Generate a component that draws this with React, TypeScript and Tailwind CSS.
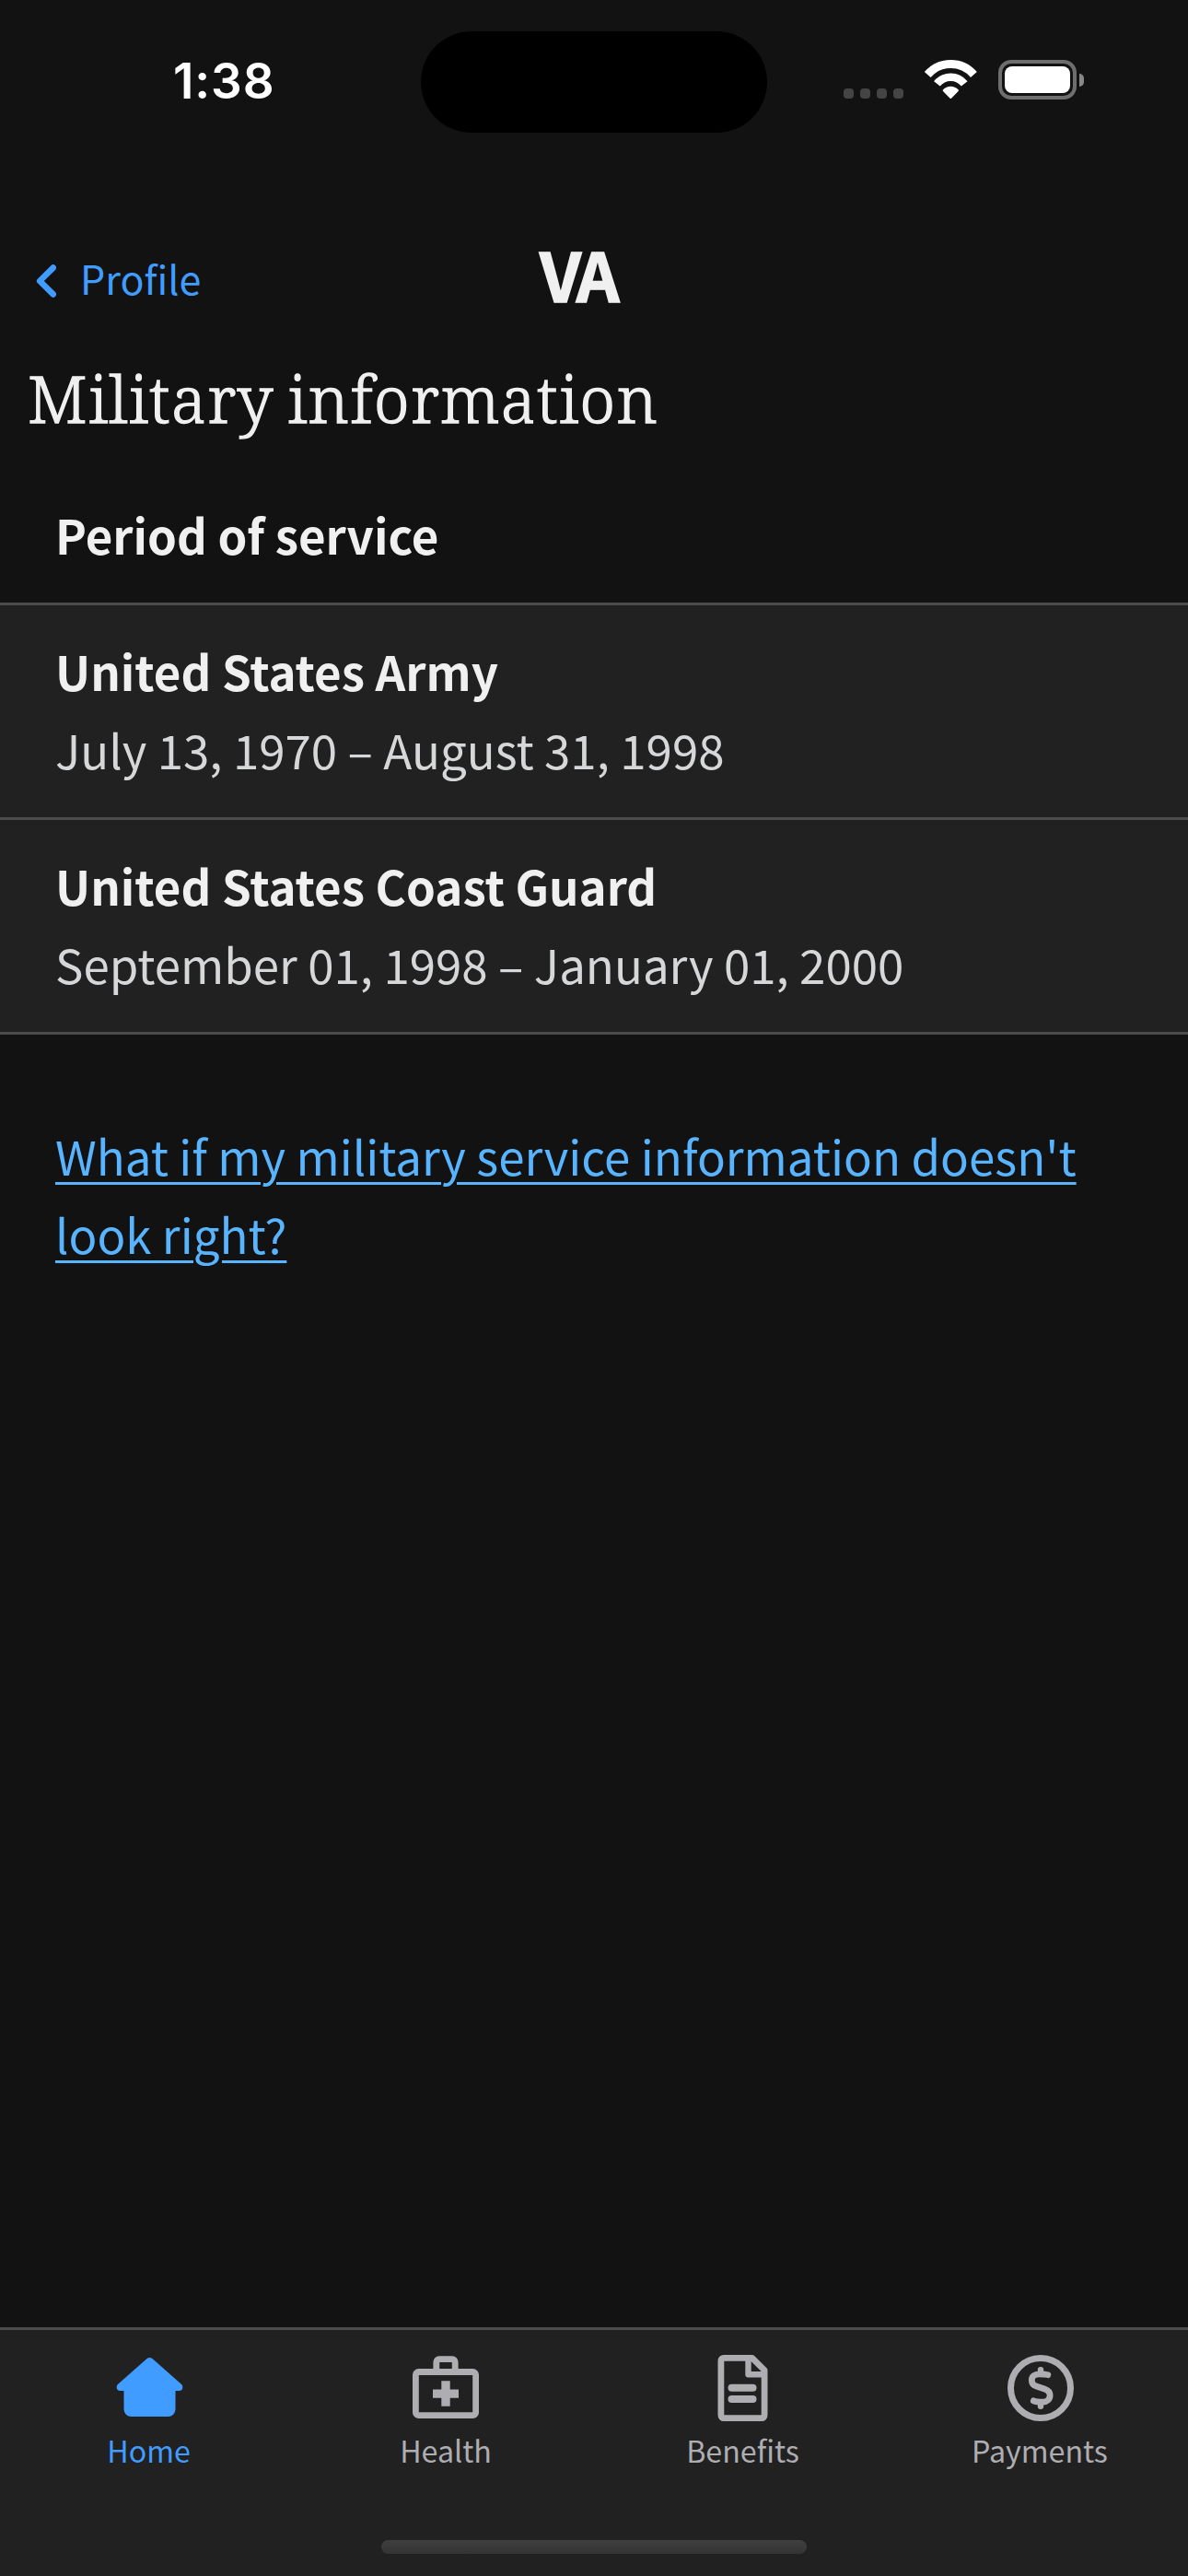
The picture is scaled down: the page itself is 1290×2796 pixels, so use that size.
import type { ReactNode } from "react";

const periods = [
  { branch: "United States Army", dates: "July 13, 1970 – August 31, 1998" },
  { branch: "United States Coast Guard", dates: "September 01, 1998 – January 01, 2000" },
];

function WifiIcon() {
  return (
    <svg className="h-[43px] w-[60px]" viewBox="-30.3 -37.7 60 43" fill="none">
      <path d="M-25.1 -21.7 A33.2 33.2 0 0 1 25.1 -21.7" stroke="#fff" strokeWidth="9" />
      <path d="M-14.9 -11.8 A19 19 0 0 1 14.9 -11.8" stroke="#fff" strokeWidth="8.6" />
      <path d="M-8.2 -5.4 A11 11 0 0 1 8.2 -5.4 Q9.2 -4.6 8.3 -3.7 L0.7 4 Q0 4.6 -0.7 4 L-8.3 -3.7 Q-9.2 -4.6 -8.2 -5.4Z" fill="#fff" />
    </svg>
  );
}

function StatusBar() {
  return (
    <div className="flex h-[256px] items-start">
      <div className="w-[457px] pt-[58px] pl-[188px] font-['Inter',sans-serif] text-[53px] leading-[60px] font-semibold tracking-[0.9px] text-white">
        1:38
      </div>
      <div className="mt-[34px] h-[110px] w-[376px] rounded-full bg-black" />
      <div className="flex items-end pt-[65px] pl-[83px]">
        <div className="mb-px flex gap-[7px]">
          <span className="size-[11px] rounded-[4px] bg-[#444]" />
          <span className="size-[11px] rounded-[4px] bg-[#444]" />
          <span className="size-[11px] rounded-[4px] bg-[#444]" />
          <span className="size-[11px] rounded-[4px] bg-[#444]" />
        </div>
        <div className="ml-[21px]">
          <WifiIcon />
        </div>
        <div className="ml-[22px] flex items-center">
          <div className="flex h-[43px] w-[85px] items-center justify-center rounded-[14px] border-4 border-[#6e6e6e]">
            <div className="h-[29px] w-[71px] rounded-[8px] bg-white" />
          </div>
          <div className="ml-[3px] h-[14px] w-[5px] rounded-r-full bg-[#888]" />
        </div>
      </div>
    </div>
  );
}

function Header() {
  return (
    <header className="flex h-[90px] items-center">
      <a className="flex w-[586px] items-center gap-[26px] pl-[39px] text-[43px] leading-[60px] text-[#409cff]">
        <svg className="mt-[8px] h-[36px] w-[22px]" viewBox="0 0 22 36" fill="none" stroke="#409cff" strokeWidth="6.6" strokeLinecap="round" strokeLinejoin="round">
          <path d="M18.7 3.6 L4.2 18 L18.7 32.4" />
        </svg>
        Profile
      </a>
      <div className="pb-[11px] text-[73px] leading-[80px] font-bold tracking-[-4px] text-[#f0f0f0] [-webkit-text-stroke:1.5px_#f0f0f0]">
        VA
      </div>
    </header>
  );
}

function HomeIcon() {
  return (
    <path
      transform="translate(0 3)"
      fill="currentColor"
      d="M32.8 1.2 Q36 -1.4 39.2 1.2 L70.6 29 Q72.8 31.4 71.6 34 Q70.6 36 68 36 H64 V56 a8 8 0 0 1 -8 8 H16 a8 8 0 0 1 -8 -8 V36 H4 Q1.4 36 .4 34 Q-.8 31.4 1.4 29Z"
    />
  );
}

function HealthIcon() {
  return (
    <g transform="translate(0 1)">
      <rect x="3.4" y="17.5" width="65.2" height="47.1" rx="3.2" fill="none" stroke="currentColor" strokeWidth="6.8" />
      <path d="M25.8 16 V6.7 a3 3 0 0 1 3 -3 H43.2 a3 3 0 0 1 3 3 V16" fill="none" stroke="currentColor" strokeWidth="6.8" />
      <path d="M31.3 27.2 h9.4 v9.2 h9.3 v9.3 h-9.3 v9 h-9.4 v-9 h-9.3 v-9.3 h9.3z" fill="currentColor" />
    </g>
  );
}

function BenefitsIcon() {
  return (
    <g transform="translate(9 0)">
      <g fill="none" stroke="currentColor" strokeWidth="6.8" strokeLinejoin="round">
        <path d="M6.4 3.4 H37.2 L50.6 16.6 V65.6 a3 3 0 0 1 -3 3 H6.4 a3 3 0 0 1 -3 -3 V6.4 a3 3 0 0 1 3 -3z" />
        <path d="M33 3.6 V21.3 H50.4" strokeWidth="6.4" />
      </g>
      <rect x="11" y="31.8" width="31" height="8" rx="4" fill="currentColor" />
      <rect x="11" y="44" width="31" height="8" rx="4" fill="currentColor" />
    </g>
  );
}

function PaymentsIcon() {
  return (
    <g fill="none" stroke="currentColor">
      <circle cx="36" cy="36" r="32.5" strokeWidth="7" />
      <g strokeWidth="6.8" strokeLinecap="round">
        <path d="M43.8 21.7 C41.8 20.9 39.5 20.8 34.4 20.8 C29.4 20.8 26.3 23.6 26.3 27.5 C26.3 31.2 28.8 33.4 32 34.3 L40.2 36.9 C44 38.1 46.1 40.6 46.1 44 C46.1 48.2 43 51.1 38.6 51.1 C33 51.1 31 51 28.3 49.8" />
        <path d="M36 16.2 V19 M36 53 V55.8" strokeWidth="6.4" />
      </g>
    </g>
  );
}

function Tab({ label, shift, color = "text-[#aeaeb2]", children }: { label: string; shift?: string; color?: string; children: ReactNode }) {
  return (
    <div className={`flex flex-col items-center ${color}`}>
      <svg className={`size-[72px] ${shift ?? ""}`} viewBox="0 0 72 72">
        {children}
      </svg>
      <span className="mt-[11px] text-[32.2px] leading-[40px]">{label}</span>
    </div>
  );
}

export default function App() {
  return (
    <div className="flex h-[2796px] w-[1290px] flex-col overflow-hidden bg-[#121212] font-['Noto_Sans_CJK_JP','Noto_Sans',sans-serif]">
      <StatusBar />
      <Header />
      <h1 className="mt-[41px] pl-[30px] font-['Noto_Serif','DejaVu_Serif',serif] text-[70px] leading-[90px] font-light tracking-[1.3px] text-[#f0f0f0] [-webkit-text-stroke:1.3px_#f0f0f0] [word-spacing:-5px]">
        Military information
      </h1>
      <h2 className="mt-[61px] h-[116px] pl-[60px] text-[51px] leading-[85px] font-bold text-[#f0f0f0]">Period of service</h2>
      <div className="border-t-[3px] border-[#4b4b4b] bg-[#212121] text-[51px] leading-[85px]">
        {periods.map((p) => (
          <div key={p.branch} className="border-b-[3px] border-[#4b4b4b] px-[60px] pt-[29px] pb-[31px]">
            <div className="font-bold text-[#f0f0f0]">{p.branch}</div>
            <div className="text-[#d6d7d9]">{p.dates}</div>
          </div>
        ))}
      </div>
      <a className="mx-[60px] mt-[89px] text-[51px] leading-[85px] text-[#58b4ff] underline decoration-[3px] underline-offset-[7px]">
        What if my military service information doesn't look right?
      </a>
      <nav className="mt-auto flex h-[270px] flex-col border-t-[3px] border-[#4b4b4b] bg-[#212121] pt-[27px]">
        <div className="grid grid-cols-[323px_322px_323px_322px]">
          <Tab label="Home" color="text-[#409cff]" shift="translate-x-[0.5px]">
            <HomeIcon />
          </Tab>
          <Tab label="Health">
            <HealthIcon />
          </Tab>
          <Tab label="Benefits" shift="-translate-x-[0.5px]">
            <BenefitsIcon />
          </Tab>
          <Tab label="Payments" shift="translate-x-px">
            <PaymentsIcon />
          </Tab>
        </div>
        <div className="mt-[78px] ml-[414px] h-[15px] w-[462px] rounded-full bg-linear-to-b from-[#3f3f3f] to-[#343434]" />
      </nav>
    </div>
  );
}
